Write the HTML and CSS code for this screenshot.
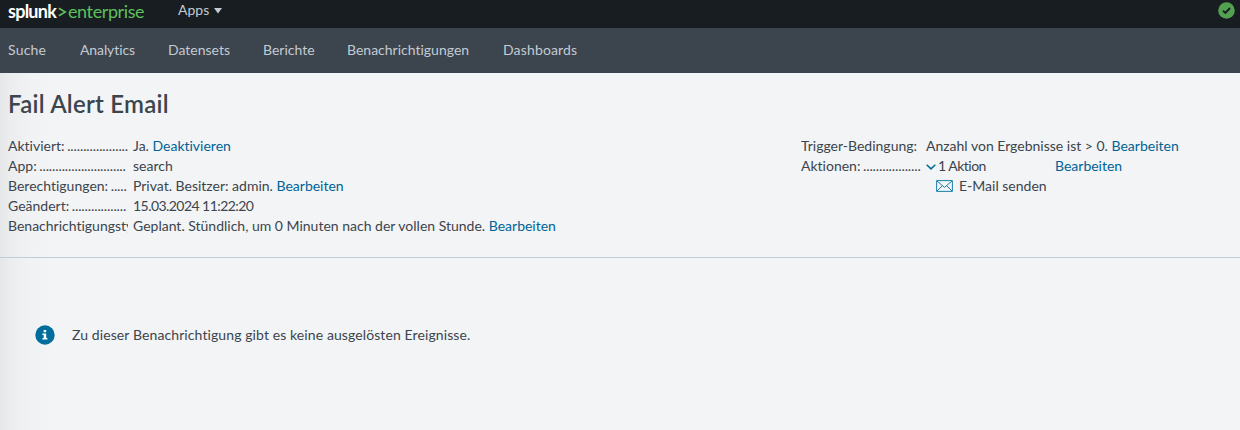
FILE: index.html
```html
<!DOCTYPE html>
<html lang="de">
<head>
<meta charset="utf-8">
<title>Fail Alert Email | Splunk</title>
<link rel="stylesheet" href="styles.css">
</head>
<body>
<header class="topbar">
  <div class="logo"><span class="logo-name">splunk</span><svg class="logo-mark" width="9" height="12" viewBox="0 0 9 12"><path d="M.9 1.2 7.3 5 .9 8.8" fill="none" stroke="#5cc05c" stroke-width="1.6"/></svg><span class="logo-product">enterprise</span></div>
  <div class="apps"><span class="apps-label">Apps</span><svg width="8" height="6" viewBox="0 0 8 6"><path d="M0 0h8L4 5.5z" fill="#c3cbd4"/></svg></div>
  <svg class="health" width="17" height="17" viewBox="0 0 17 17"><circle cx="8.5" cy="8.5" r="8.3" fill="#53a051"/><path d="M5 8.8 7.4 11 12 6" fill="none" stroke="#171d21" stroke-width="1.9"/></svg>
</header>
<nav class="nav">
  <a class="n1">Suche</a><a class="n2">Analytics</a><a class="n3">Datensets</a><a class="n4">Berichte</a><a class="n5">Benachrichtigungen</a><a class="n6">Dashboards</a>
</nav>
<main class="page">
  <section class="summary">
    <h1>Fail Alert Email</h1>
    <div class="columns">
      <dl class="details">
        <dt>Aktiviert: <i>....................</i></dt><dd>Ja. <a>Deaktivieren</a></dd>
        <dt>App: <i>...........................</i></dt><dd>search</dd>
        <dt>Berechtigungen: <i>.....</i></dt><dd>Privat. Besitzer: admin. <a>Bearbeiten</a></dd>
        <dt>Geändert: <i>.................</i></dt><dd class="date">15.03.2024 11:22:20</dd>
        <dt>Benachrichtigungstyp:</dt><dd>Geplant. Stündlich, um 0 Minuten nach der vollen Stunde. <a>Bearbeiten</a></dd>
      </dl>
      <dl class="details trigger">
        <dt>Trigger-Bedingung:</dt><dd>Anzahl von Ergebnisse ist &gt; 0. <a>Bearbeiten</a></dd>
        <dt>Aktionen: <i>..................</i></dt>
        <dd class="actions">
          <div class="action-row"><svg width="10" height="6" viewBox="0 0 10 6"><path d="M.7.7 5 4.9 9.3.7" fill="none" stroke="#006d9c" stroke-width="1.5"/></svg><span class="count">1 Aktion</span><a class="edit">Bearbeiten</a></div>
          <div class="mail-row"><svg width="17" height="12" viewBox="0 0 17 12"><path d="M.6.6h15.8v10.8H.6zM1 1l7.5 6.4L16 1M1 11l5.4-5.3M16 11l-5.4-5.3" fill="none" stroke="#1a80b0"/></svg><span class="mail">E-Mail senden</span></div>
        </dd>
      </dl>
    </div>
  </section>
  <section class="empty">
    <svg width="20" height="20" viewBox="0 0 20 20"><circle cx="10" cy="10" r="9.7" fill="#006d9c"/><path d="M8.6 5h2.6v2.2H8.6zM7.4 8.4h3.8v4.7h1.2v1.5h-5v-1.5h1.3V9.9H7.4z" fill="#fff"/></svg>
    <span class="message">Zu dieser Benachrichtigung gibt es keine ausgelösten Ereignisse.</span>
  </section>
</main>
</body>
</html>
```
FILE: styles.css
```css
* { box-sizing: border-box; }
body { margin: 0; font: 14px/20px Lato, "Liberation Sans", sans-serif; font-variant-ligatures: none; color: #3c444d; background: #f2f4f5; }
svg { display: block; flex: none; }
a { color: #006297; }
.topbar { display: flex; height: 28px; padding-left: 8px; background: #171d21; }
.logo { display: flex; width: 170px; line-height: 22px; font-size: 18px; }
.logo-name { width: 50px; color: #fff; font-weight: 700; letter-spacing: -.75px; }
.logo-mark { margin: 7px 1px 0 0; }
.logo-product { color: #5cc05c; letter-spacing: -.4px; }
.apps { display: flex; color: #c3cbd4; }
.apps-label { width: 36px; }
.apps svg { margin-top: 8px; }
.health { margin: 2px 5px 0 auto; }
.nav { display: flex; gap: 33px; height: 45px; padding: 12px 8px; background: #3c444d; white-space: nowrap; }
.nav a { color: #c3cbd4; }
.n1 { width: 39px; letter-spacing: .2px; }
.n2 { width: 55px; letter-spacing: -.1px; }
.n3 { width: 62px; }
.n4 { width: 51px; }
.n5 { width: 123px; }
.n6 { letter-spacing: .15px; }
.page { height: 357px; background: linear-gradient(90deg, #e6e7e9, #ecedef 10px, #f0f2f3 30px, #f2f4f5 55px); }
.summary { height: 185px; padding: 16px 8px 0; border-bottom: 1px solid #c3cbd4; }
h1 { margin: 0; height: 47px; font-size: 24px; line-height: 30px; font-weight: 600; letter-spacing: .25px; }
.columns { display: flex; }
.details { display: grid; grid-template-columns: 120px 1fr; column-gap: 5px; grid-auto-rows: 20px; width: 793px; margin: 0; white-space: nowrap; }
.trigger { width: 400px; }
dt { overflow: hidden; }
dt i { font-style: normal; margin-left: -1px; letter-spacing: -.1px; }
dd { margin: 0; }
.date { letter-spacing: -.55px; }
.action-row, .mail-row { display: flex; }
.action-row svg { margin: 8px 2px 0 0; }
.count { width: 117px; letter-spacing: -.5px; }
.mail-row svg { margin: 4px 6px 0 10px; }
.empty { display: flex; gap: 17px; padding: 67px 35px 0; }
.message { letter-spacing: .1px; }
```
